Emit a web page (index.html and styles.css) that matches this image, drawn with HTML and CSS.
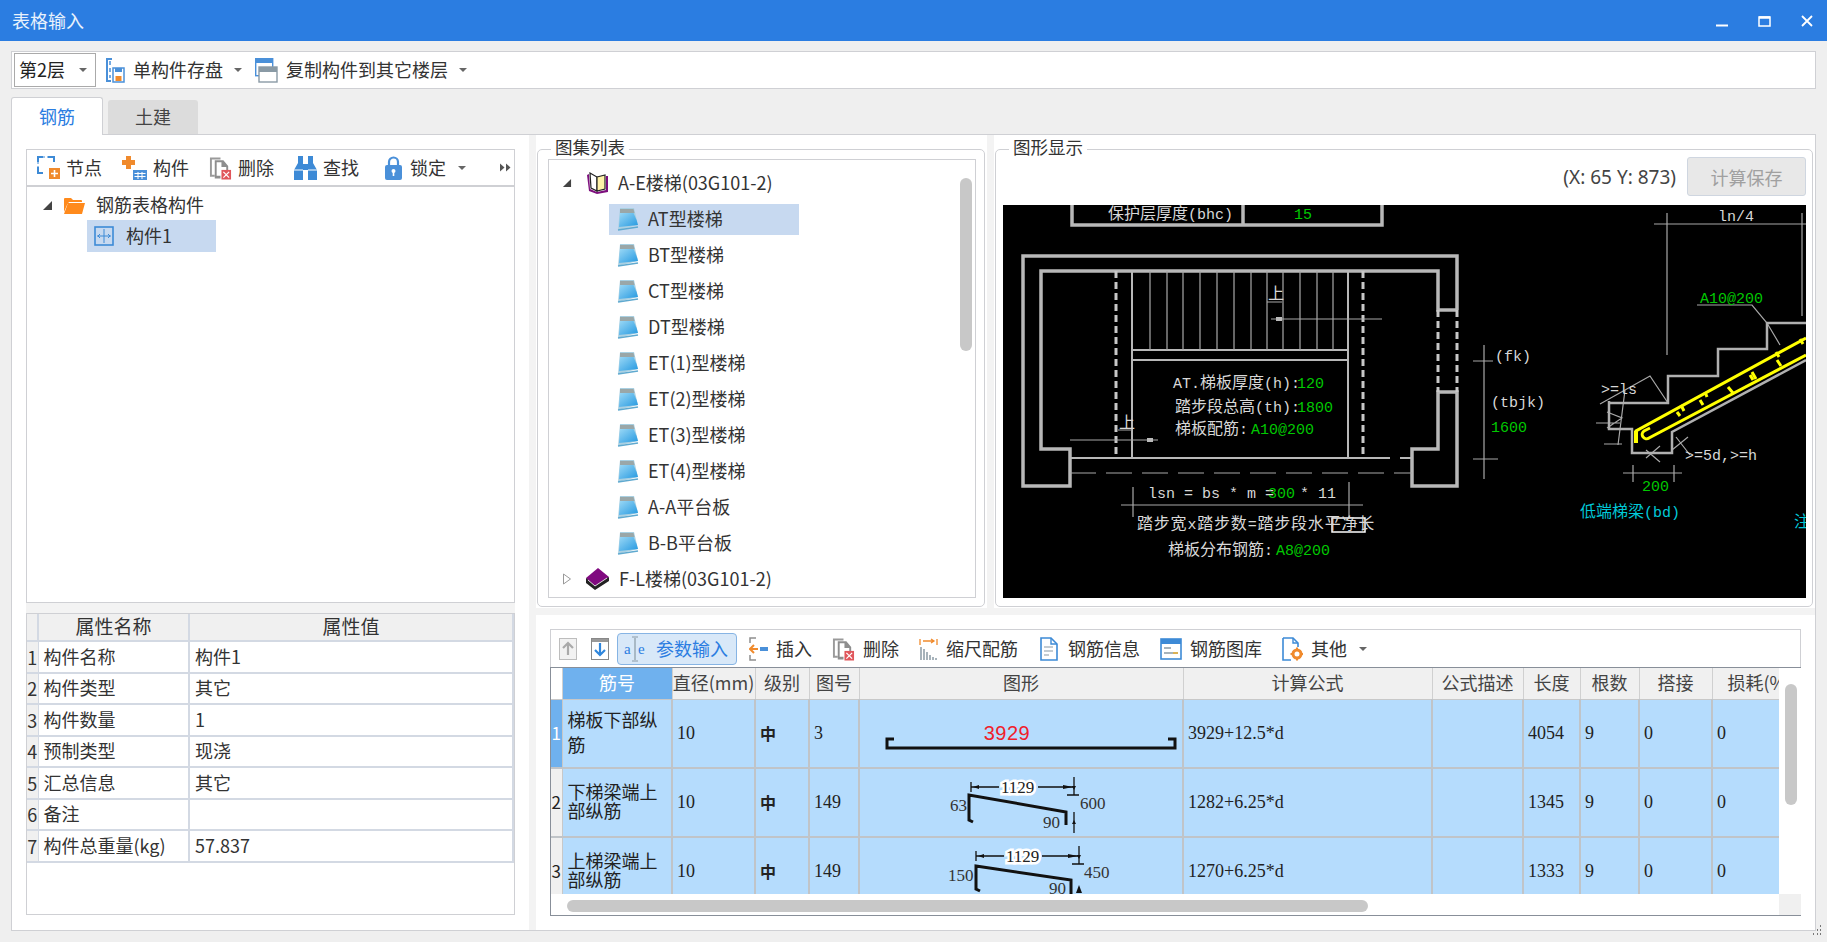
FILE: index.html
```html
<!DOCTYPE html>
<html lang="zh-CN">
<head>
<meta charset="utf-8">
<title>表格输入</title>
<link rel="stylesheet" href="styles.css">
</head>
<body>
<svg class="defs" width="0" height="0" aria-hidden="true">
  <defs>
    <linearGradient id="docgrad" x1="0" y1="0" x2="1" y2="1"><stop offset="0" stop-color="#9ad8f6"/><stop offset="1" stop-color="#2498e0"/></linearGradient>
    <symbol id="i-doc" viewBox="0 0 22 24">
      <path d="M1 23 L3 1 H17 L21 18 L1 23Z" fill="#a9d0e2"/>
      <path d="M3 7 L3 2 H16.500 L17.500 6Z" fill="#9aa7a8"/>
      <path d="M3 6 H16.500 Q20 13 21 18 L2 20Z" fill="url(#docgrad)"/>
      <path d="M1 23 L21 20" stroke="#5fa9cf" stroke-width="1.500"/>
    </symbol>
    <symbol id="i-del" viewBox="0 0 24 24">
      <path d="M1 1H12V3H3V19H6V21H1Z" fill="#9a9a9a"/>
      <path d="M6 4H15L20 10V14H18V11H13V6H8V20H12V23H6Z" fill="#8e8e8e"/>
      <rect x="13" y="14" width="10" height="10" fill="#e0565b"/>
      <path d="M15 16L21 22M21 16L15 22" stroke="#fff" stroke-width="1.300"/>
    </symbol>
    <symbol id="i-arrow" viewBox="0 0 10 6"><path d="M1 1H9L5 5Z" fill="#666"/></symbol>
  </defs>
</svg>

<header class="titlebar">
  <span class="title">表格输入</span>
  <div class="winbtns">
    <svg width="12" height="12" viewBox="0 0 12 12"><path d="M0 10.500H12" stroke="#fff" stroke-width="2"/></svg>
    <svg width="13" height="12" viewBox="0 0 13 12"><rect x="1" y="2" width="11" height="9" fill="none" stroke="#fff" stroke-width="1.500"/><path d="M1 2.500H12" stroke="#fff" stroke-width="2.500"/></svg>
    <svg width="12" height="12" viewBox="0 0 12 12"><path d="M1 1L11 11M11 1L1 11" stroke="#fff" stroke-width="1.800"/></svg>
  </div>
</header>

<div class="topbar">
  <div class="select"><span>第2层</span><svg class="caret" width="10" height="6"><use href="#i-arrow"/></svg></div>
  <div class="tool t1">
    <svg width="20" height="26" viewBox="0 0 20 26"><path d="M1 1H7V3H3V23H6V25H1Z" fill="#4a90d9"/><path d="M5 4V8M5 11V15M5 18V21" stroke="#4a90d9" stroke-width="1.500"/><rect x="8" y="11" width="11" height="14" fill="#fff" stroke="#4a90d9" stroke-width="1.500"/><rect x="10" y="11" width="7" height="4" fill="#4a90d9"/><rect x="10.500" y="19" width="6" height="5" fill="#f08a2c"/></svg>
    <span>单构件存盘</span><svg class="caret" width="10" height="6"><use href="#i-arrow"/></svg>
  </div>
  <div class="tool t2">
    <svg width="23" height="25" viewBox="0 0 23 25"><rect x="0.700" y="0.700" width="17" height="17" fill="#fff" stroke="#4a90d9" stroke-width="1.400"/><rect x="0" y="0" width="18" height="5" fill="#4a90d9"/><rect x="4" y="9" width="18" height="15" fill="#fff" stroke="#8a9aa5" stroke-width="1.400"/><rect x="4" y="9" width="18" height="5" fill="#8a9aa5"/></svg>
    <span>复制构件到其它楼层</span><svg class="caret" width="10" height="6"><use href="#i-arrow"/></svg>
  </div>
</div>

<nav class="tabs">
  <div class="tab active">钢筋</div>
  <div class="tab">土建</div>
</nav>

<main class="panel">
  <section class="left">
    <div class="ltools">
      <div class="tool">
        <svg width="23" height="23" viewBox="0 0 23 23"><path d="M1 6V1H6M11 1H17V6M1 11V17H6" fill="none" stroke="#3d8ad6" stroke-width="2"/><path d="M6 1H11M1 6V11" stroke="#3d8ad6" stroke-width="1" stroke-dasharray="2 2"/><rect x="12" y="12" width="11" height="11" fill="#f08a2c"/><path d="M17.500 14V21M14 17.500H21" stroke="#fff" stroke-width="1.600"/></svg>
        <span>节点</span>
      </div>
      <div class="tool">
        <svg width="25" height="24" viewBox="0 0 25 24"><path d="M4 0H9V4H13V9H9V13H4V9H0V4H4Z" fill="#f08a2c"/><rect x="11" y="14" width="14" height="10" fill="#4a90d9"/><path d="M12.500 17.500H23.500M12.500 20.500H23.500M16 16V23M20 16V23" stroke="#fff" stroke-width="1"/></svg>
        <span>构件</span>
      </div>
      <div class="tool"><svg width="23" height="24"><use href="#i-del"/></svg><span>删除</span></div>
      <div class="tool">
        <svg width="23" height="24" viewBox="0 0 23 24"><path d="M4 0H9V8H14V0H19V7L23 14V24H14V14H9V24H0V14L4 7Z" fill="#3d8ad6"/><path d="M0 14H9M14 14H23" stroke="#fff" stroke-width="1.200"/></svg>
        <span>查找</span>
      </div>
      <div class="tool lock">
        <svg width="17" height="24" viewBox="0 0 17 24"><path d="M4 10V6a4.500 4.500 0 0 1 9 0V10" fill="none" stroke="#4a90d9" stroke-width="2.200"/><rect x="0" y="9" width="17" height="15" rx="2" fill="#4a90d9"/><circle cx="8.500" cy="15" r="2" fill="#fff"/><path d="M8.500 15V20" stroke="#fff" stroke-width="1.600"/></svg>
        <span>锁定</span><svg class="caret" width="10" height="6"><use href="#i-arrow"/></svg>
      </div>
      <svg class="more" width="11" height="9" viewBox="0 0 11 9"><path d="M0 0.500L4.500 4.500L0 8.500ZM6 0.500L10.500 4.500L6 8.500Z" fill="#555"/></svg>
    </div>
    <div class="tree">
      <div class="tree-root">
        <svg class="tri" width="11" height="11" viewBox="0 0 11 11"><path d="M10 1V10H1Z" fill="#444"/></svg>
        <svg width="21" height="17" viewBox="0 0 21 17"><path d="M0 2a1 1 0 0 1 1-1h6l2 2h8a1 1 0 0 1 1 1v1H5L3 8L0 15Z" fill="#ff8a1c"/><path d="M4 6H21L18 17H0Z" fill="#ff8a1c"/></svg>
        <span>钢筋表格构件</span>
      </div>
      <div class="tree-child">
        <svg width="20" height="20" viewBox="0 0 20 20"><rect x="1" y="1" width="18" height="18" fill="none" stroke="#3d8ad6" stroke-width="1.600"/><path d="M10 3V17M3 10H17M6 8L4 10L6 12M14 8L16 10L14 12" fill="none" stroke="#3d8ad6" stroke-width="1"/></svg>
        <span>构件1</span>
      </div>
    </div>
    <div class="lgap"></div>
    <div class="props">
      <table class="ptable">
        <colgroup><col class="p0"><col class="p1"><col></colgroup>
        <thead><tr><th></th><th>属性名称</th><th>属性值</th></tr></thead>
        <tbody>
          <tr><td class="n">1</td><td>构件名称</td><td>构件1</td></tr>
          <tr><td class="n">2</td><td>构件类型</td><td>其它</td></tr>
          <tr><td class="n">3</td><td>构件数量</td><td>1</td></tr>
          <tr><td class="n">4</td><td>预制类型</td><td>现浇</td></tr>
          <tr><td class="n">5</td><td>汇总信息</td><td>其它</td></tr>
          <tr><td class="n">6</td><td>备注</td><td></td></tr>
          <tr><td class="n">7</td><td>构件总重量(kg)</td><td>57.837</td></tr>
        </tbody>
      </table>
    </div>
  </section>
  <div class="lsplit"></div>

  <section class="right">
    <div class="rtop">
      <div class="pane pane-list">
        <div class="group">
          <span class="legend">图集列表</span>
          <div class="atlas">
            <div class="a-head">
              <svg class="tri" width="10" height="10" viewBox="0 0 11 11"><path d="M10 1V10H1Z" fill="#444"/></svg>
              <svg class="book" width="24" height="24" viewBox="0 0 24 24"><path d="M2 4L4 20L12 23L23 21V5L21 5V19L12 21L5 18L4 3Z" fill="#7d0f7d"/><path d="M5 2L12 6V20L6 17Z" fill="#fff" stroke="#222" stroke-width="1.200"/><path d="M12 6L20 4V18L12 20Z" fill="#fff3a8" stroke="#222" stroke-width="1.200"/></svg>
              <span>A-E楼梯(03G101-2)</span>
            </div>
            <div class="a-item"><div class="a-in sel"><svg width="22" height="24"><use href="#i-doc"/></svg><span>AT型楼梯</span></div></div>
            <div class="a-item"><div class="a-in"><svg width="22" height="24"><use href="#i-doc"/></svg><span>BT型楼梯</span></div></div>
            <div class="a-item"><div class="a-in"><svg width="22" height="24"><use href="#i-doc"/></svg><span>CT型楼梯</span></div></div>
            <div class="a-item"><div class="a-in"><svg width="22" height="24"><use href="#i-doc"/></svg><span>DT型楼梯</span></div></div>
            <div class="a-item"><div class="a-in"><svg width="22" height="24"><use href="#i-doc"/></svg><span>ET(1)型楼梯</span></div></div>
            <div class="a-item"><div class="a-in"><svg width="22" height="24"><use href="#i-doc"/></svg><span>ET(2)型楼梯</span></div></div>
            <div class="a-item"><div class="a-in"><svg width="22" height="24"><use href="#i-doc"/></svg><span>ET(3)型楼梯</span></div></div>
            <div class="a-item"><div class="a-in"><svg width="22" height="24"><use href="#i-doc"/></svg><span>ET(4)型楼梯</span></div></div>
            <div class="a-item"><div class="a-in"><svg width="22" height="24"><use href="#i-doc"/></svg><span>A-A平台板</span></div></div>
            <div class="a-item"><div class="a-in"><svg width="22" height="24"><use href="#i-doc"/></svg><span>B-B平台板</span></div></div>
            <div class="a-head">
              <svg class="tri" width="10" height="12" viewBox="0 0 10 12"><path d="M1.500 1L8.500 6L1.500 11Z" fill="#fff" stroke="#999"/></svg>
              <svg class="book" width="25" height="24" viewBox="0 0 25 24"><path d="M1 11L13 1L24 10L10 22Z" fill="#800a80"/><path d="M1 11V16L10 23L24 14V10L10 19Z" fill="#222"/><path d="M3 13L10 19L22 11" stroke="#ddd" stroke-width="1" fill="none"/></svg>
              <span>F-L楼梯(03G101-2)</span>
            </div>
            <div class="vthumb"></div>
          </div>
        </div>
      </div>
      <div class="vsplit"></div>
      <div class="pane pane-draw">
        <div class="group">
          <span class="legend legend2">图形显示</span>
          <div class="drawhead">
            <span class="coords">(X: 65 Y: 873)</span>
            <button class="calc" type="button">计算保存</button>
          </div>
          <svg class="cad" width="803" height="393" viewBox="1003 205 803 393">
            <rect x="1003" y="205" width="803" height="393" fill="#000"/>
            <g class="th" fill="none">
              <path d="M1072 205V225H1382V205M1243 205V225"/>
              <path d="M1457 310V256H1023V486H1070V449H1041V271H1438V310H1457"/>
              <path d="M1457 392H1438V449H1412V486H1457Z"/>
            </g>
            <g class="dash" fill="none">
              <path d="M1438 310V392M1457 310V392M1116 271V458M1363 271V458"/>
            </g>
            <g class="md" fill="none">
              <path d="M1132 271V458M1348 271V458M1132 350H1348M1132 360H1348M1070 458H1390M1400 458H1412"/>
            </g>
            <g class="tn" fill="none">
              <path d="M1150 271V350M1167 271V350M1183 271V350M1200 271V350M1217 271V350M1234 271V350M1251 271V350M1267 271V350M1283 271V350M1300 271V350M1317 271V350M1333 271V350"/>
              <path d="M1271 319H1382M1070 440H1158M1267 302H1282M1118 430H1132"/>
              <path d="M1121 505H1363M1133 487V517M1349 482V517"/>
              <path d="M1070 473H1412" stroke-dasharray="26 10"/>
              <path d="M1654 224H1806M1667 213V355M1802 213V316"/>
              <path d="M1697 305H1752L1767 323L1780 345"/>
              <path d="M1473 361H1493M1484 345V479M1473 459H1498"/>
              <path d="M1623 473H1682M1633 465V482M1674 465V482"/>
              <path d="M1600 404L1650 376L1668 403M1625 390L1618 445M1596 423H1620M1607 412L1622 418L1607 428M1604 444H1622M1646 458L1660 446M1646 450L1660 462M1676 437L1690 455M1672 450L1688 437"/>
            </g>
            <rect x="1276" y="317" width="6" height="4" fill="#bbb"/>
            <rect x="1147" y="438" width="6" height="4" fill="#bbb"/>
            <rect class="wbox" x="1332" y="518" width="33" height="14" fill="none"/>
            <g class="th2" fill="none">
              <path d="M1609 401V429H1632V453H1672V432L1806 360M1609 403H1668V376H1718V349H1767V323H1806"/>
            </g>
            <g class="yl" fill="none">
              <path d="M1636 443V431L1806 338"/>
              <path d="M1806 355L1649 438A4 4 0 0 1 1644 431L1650 428"/>
              <path d="M1677 412L1680 416M1700 400L1703 405M1728 387L1733 393M1752 372L1756 379M1777 360L1781 366M1800 339L1803 344M1681 405L1684 411M1705 392L1707 397M1750 375L1753 380M1776 352L1779 357"/>
            </g>
            <rect x="1634" y="431" width="4" height="12" fill="#ff0"/>
            <g class="ct w">
              <text x="1108" y="219"><tspan class="z">保护层厚度</tspan>(bhc)</text>
              <text x="1173" y="388">AT.<tspan class="z">梯板厚度</tspan>(h):</text>
              <text x="1175" y="412"><tspan class="z">踏步段总高</tspan>(th):</text>
              <text x="1175" y="434"><tspan class="z">梯板配筋</tspan>:</text>
              <text x="1148" y="498">lsn = bs * m =</text>
              <text x="1137" y="529" class="wide"><tspan class="z">踏步宽</tspan>x<tspan class="z">踏步数</tspan>=<tspan class="z">踏步段水平净长</tspan></text>
              <text x="1168" y="555"><tspan class="z">梯板分布钢筋</tspan>:</text>
              <text x="1268" y="299" class="z">上</text>
              <text x="1119" y="428" class="z">上</text>
              <text x="1718" y="221">ln/4</text>
              <text x="1495" y="361">(fk)</text>
              <text x="1491" y="407">(tbjk)</text>
              <text x="1601" y="394">&gt;=ls</text>
              <text x="1685" y="460">&gt;=5d,&gt;=h</text>
              <text x="1300" y="498">* 11</text>
            </g>
            <g class="ct g">
              <text x="1294" y="219">15</text>
              <text x="1297" y="388">120</text>
              <text x="1297" y="412">1800</text>
              <text x="1251" y="434">A10@200</text>
              <text x="1268" y="498">300</text>
              <text x="1276" y="555">A8@200</text>
              <text x="1700" y="303">A10@200</text>
              <text x="1491" y="432">1600</text>
              <text x="1642" y="491">200</text>
            </g>
            <g class="ct c">
              <text x="1580" y="517"><tspan class="z">低端梯梁</tspan>(bd)</text>
              <text x="1794" y="527" class="z">注</text>
            </g>
          </svg>
        </div>
      </div>
    </div>
    <div class="hsplit"></div>
    <div class="rbottom">
      <div class="gtools">
        <svg class="updown first" width="18" height="22" viewBox="0 0 18 22"><rect x="0.500" y="0.500" width="17" height="21" fill="#f2f2f2" stroke="#bdbdbd"/><path d="M9 5V17M4 10L9 5L14 10" fill="none" stroke="#aaa" stroke-width="2.200"/></svg>
        <svg class="updown" width="18" height="22" viewBox="0 0 18 22"><rect x="0.500" y="0.500" width="17" height="21" fill="#fff" stroke="#888"/><rect x="1" y="1" width="16" height="3" fill="#999"/><path d="M9 5V17M4 12L9 17L14 12" fill="none" stroke="#2f86dc" stroke-width="2.200"/></svg>
        <div class="tool param">
          <svg width="22" height="28" viewBox="0 0 22 28"><text class="aje" x="0" y="19">a</text><text class="aje" x="14" y="19">e</text><path d="M11 3V25M8 2H14M8 26H14" stroke="#8a9aa5" stroke-width="1.200" fill="none"/></svg>
          <span>参数输入</span>
        </div>
        <div class="tool">
          <svg width="19" height="24" viewBox="0 0 19 24"><path d="M1 6V1H7M1 18V23H7" fill="none" stroke="#8e8e8e" stroke-width="1.500"/><path d="M9 12H1M5 8L1 12L5 16" fill="none" stroke="#f08a2c" stroke-width="2"/><path d="M11 10H19V14H11Z" fill="#4a90d9"/></svg>
          <span>插入</span>
        </div>
        <div class="tool"><svg width="23" height="24"><use href="#i-del"/></svg><span>删除</span></div>
        <div class="tool">
          <svg width="19" height="24" viewBox="0 0 19 24"><path d="M1 2V8M18 2V8M4 4H15M12 2L15 4L12 6" fill="none" stroke="#f08a2c" stroke-width="1.300"/><path d="M2 10V23M5 12V23M8 15V23M11 18V23M14 20V23M17 21V23" stroke="#8a9aa5" stroke-width="1.500"/></svg>
          <span>缩尺配筋</span>
        </div>
        <div class="tool info">
          <svg width="18" height="24" viewBox="0 0 18 24"><path d="M1 1H11L17 7V23H1Z" fill="#fff" stroke="#3d8ad6" stroke-width="1.600"/><path d="M11 1V7H17" fill="none" stroke="#3d8ad6" stroke-width="1.400"/><path d="M4 10H13M4 14H13M4 18H9" stroke="#8a9aa5" stroke-width="1.200"/></svg>
          <span>钢筋信息</span>
        </div>
        <div class="tool">
          <svg width="22" height="22" viewBox="0 0 22 22"><rect x="1" y="1" width="20" height="20" fill="#fff" stroke="#3d8ad6" stroke-width="1.600"/><rect x="1" y="1" width="20" height="5" fill="#3d8ad6"/><path d="M4 10H11M4 15H18" stroke="#8a9aa5" stroke-width="1.400"/><path d="M13 15H18" stroke="#f0b02c" stroke-width="1.400"/></svg>
          <span>钢筋图库</span>
        </div>
        <div class="tool">
          <svg width="21" height="24" viewBox="0 0 21 24"><path d="M1 1H11L16 6V10M1 1V23H9" fill="#fff" stroke="#3d8ad6" stroke-width="1.600"/><path d="M11 1V6H16" fill="none" stroke="#3d8ad6" stroke-width="1.400"/><circle cx="15" cy="17" r="4" fill="none" stroke="#f08a2c" stroke-width="3"/><path d="M15 10.500V12M15 22V23.500M8.500 17H10M20 17H21.500" stroke="#f08a2c" stroke-width="2"/></svg>
          <span>其他</span><svg class="caret" width="10" height="6"><use href="#i-arrow"/></svg>
        </div>
      </div>
      <div class="gridbox">
        <div class="gridview">
          <table class="gtable">
            <colgroup>
              <col class="c0"><col class="c1"><col class="c2"><col class="c3"><col class="c4"><col class="c5"><col class="c6"><col class="c7"><col class="c8"><col class="c9"><col class="c10"><col class="c11">
            </colgroup>
            <thead>
              <tr><th class="corner"></th><th class="on">筋号</th><th>直径(mm)</th><th>级别</th><th>图号</th><th>图形</th><th>计算公式</th><th>公式描述</th><th>长度</th><th>根数</th><th>搭接</th><th class="clip">损耗(%)</th></tr>
            </thead>
            <tbody>
              <tr>
                <td class="rn on">1</td><td class="name loose">梯板下部纵筋</td><td class="num">10</td><td class="lvl">中</td><td class="num">3</td>
                <td class="shape"><svg width="324" height="67" viewBox="859 700 324 67"><path class="bar" d="M893 739H886V748H1174V739H1167" fill="none"/><text class="red" x="1006" y="740">3929</text></svg></td>
                <td class="num">3929+12.5*d</td><td></td><td class="num">4054</td><td class="num">9</td><td class="num">0</td><td class="num">0</td>
              </tr>
              <tr>
                <td class="rn">2</td><td class="name">下梯梁端上部纵筋</td><td class="num">10</td><td class="lvl">中</td><td class="num">149</td>
                <td class="shape"><svg width="324" height="67" viewBox="859 769 324 67">
                  <path class="dim" d="M970 782V792M970 787H998M1037 787H1073M1073 777V795M1066 795H1078M1073 812V833" fill="none"/>
                  <path class="tick" d="M972 787L978 785V789ZM1072 787L1062 785V789ZM1073 820L1071 824H1075ZM1073 790L1071 786H1075Z"/>
                  <path class="bar2" d="M972 822L968 820V795L1065 812V825" fill="none"/>
                  <text class="sh" x="1000" y="793">1129</text>
                  <text class="sh2" x="949" y="811">63</text><text class="sh2" x="1079" y="809">600</text><text class="sh2" x="1042" y="828">90</text>
                </svg></td>
                <td class="num">1282+6.25*d</td><td></td><td class="num">1345</td><td class="num">9</td><td class="num">0</td><td class="num">0</td>
              </tr>
              <tr>
                <td class="rn">3</td><td class="name">上梯梁端上部纵筋</td><td class="num">10</td><td class="lvl">中</td><td class="num">149</td>
                <td class="shape"><svg width="324" height="67" viewBox="859 838 324 67">
                  <path class="dim" d="M975 851V861M975 856H1003M1041 856H1078M1078 846V864M1071 864H1083" fill="none"/>
                  <path class="tick" d="M977 856L983 854V858ZM1077 856L1067 854V858ZM1078 859L1076 855H1080ZM1078 885L1075 893H1081Z"/>
                  <path class="bar2" d="M979 891L975 889V866L1070 880V900" fill="none"/>
                  <text class="sh" x="1005" y="862">1129</text>
                  <text class="sh2" x="947" y="881">150</text><text class="sh2" x="1083" y="878">450</text><text class="sh2" x="1048" y="894">90</text>
                </svg></td>
                <td class="num">1270+6.25*d</td><td></td><td class="num">1333</td><td class="num">9</td><td class="num">0</td><td class="num">0</td>
              </tr>
            </tbody>
          </table>
        </div>
        <div class="vbar"><div class="vbar-thumb"></div></div>
        <div class="hbar"><div class="hbar-thumb"></div></div>
        <div class="cornerbox"></div>
      </div>
    </div>
  </section>
</main>
<footer class="status"><svg width="14" height="11" viewBox="0 0 14 11"><path d="M12 1h1M9 5h1M12 5h1M5 9h1M9 9h1M12 9h1" stroke="#777" stroke-width="2" fill="none"/></svg></footer>
</body>
</html>
```

FILE: styles.css
```css
* { box-sizing: border-box; }
html, body { margin: 0; padding: 0; }
body {
  width: 1827px; height: 942px; overflow: hidden;
  background: #efefef; color: #333;
  font-family: "Noto Sans CJK SC", "Noto Sans", sans-serif;
  font-size: 18px; line-height: 24px;
  display: flex; flex-direction: column;
}
.defs { flex: none; display: block; }
svg { flex: none; }
.titlebar {
  height: 41px; flex: none; background: #2b7de1; color: #e8f2fc;
  display: flex; align-items: center; justify-content: space-between;
  padding: 0 14px 0 12px;
}
.title { font-size: 18px; padding-bottom: 2px; }
.winbtns { display: flex; gap: 30px; align-items: center; }

.topbar {
  flex: none; height: 38px; margin: 10px 11px 0 11px;
  background: #fff; border: 1px solid #cfd0d4;
  display: flex; align-items: center; padding-left: 2px;
}
.topbar span { padding-bottom: 2px; }
.select {
  width: 82px; height: 34px; border: 1px solid #aaa; background: #fff;
  display: flex; align-items: center; justify-content: space-between;
  padding: 0 7px 0 4px; color: #222;
}
.tool { display: flex; align-items: center; gap: 8px; white-space: nowrap; }
.caret { display: block; }
.t1 { margin-left: 9px; }
.t1 .caret { margin-left: 2px; }
.t2 { margin-left: 12px; }
.t2 .caret { margin-left: 2px; }

.tabs { flex: none; height: 37px; margin: 8px 11px 0 11px; display: flex; align-items: flex-end; gap: 5px; }
.tab {
  width: 90px; height: 34px; background: #dcdcdc; border-radius: 3px 3px 0 0; padding-bottom: 2px;
  display: flex; align-items: center; justify-content: center; color: #444;
}
.tab.active {
  width: 92px; height: 38px; margin-bottom: -1px; background: #fff; color: #2b7de1;
  border: 1px solid #cfd0d4; border-bottom: 0; position: relative;
}
.panel {
  flex: none; height: 797px; margin: 0 11px; display: flex;
  border: 1px solid #cfd0d4; background: #fff;
}
.left { width: 517px; flex: none; padding: 14px 14px 15px; display: flex; flex-direction: column; background: #fff; }
.lsplit { width: 7px; flex: none; background: #f3f3f3; }
.ltools {
  height: 38px; flex: none; border: 1px solid #cfd0d4; border-bottom-width: 2px;
  display: flex; align-items: center; padding-left: 10px; gap: 20px; position: relative;
}
.ltools span { padding-bottom: 2px; }
.ltools .tool { gap: 6px; }
.ltools .lock { margin-left: 6px; gap: 8px; }
.ltools .caret { margin-left: 3px; }
.more { margin-left: auto; margin-right: 3px; }
.tree { height: 416px; flex: none; border: 1px solid #cfd0d4; border-top: 0; padding-top: 5px; }
.tree-root { height: 26px; display: flex; align-items: center; padding-left: 15px; color: #333; }
.tree-root .tri { margin-right: 11px; }
.tree-root span { margin-left: 11px; padding-bottom: 3px; }
.tree-child {
  margin: 2px 0 0 60px; width: 129px; height: 32px; background: #c7d9f0;
  display: flex; align-items: center; padding-left: 7px; gap: 12px;
}
.tree-child span { padding-bottom: 2px; }
.lgap { height: 10px; flex: none; background: #f3f3f3; }
.props { height: 302px; flex: none; border: 1px solid #cfd0d4; }
.ptable { width: 100%; border-collapse: collapse; table-layout: fixed; }
.p0 { width: 11px; }
.p1 { width: 151px; }
.ptable th {
  height: 27px; background: #f0f0f0; font-weight: 400; font-size: 19px; padding: 0 0 2px;
  border-right: 2px solid #d3d9e3; border-bottom: 2px solid #d3d9e3; line-height: 24px;
}
.ptable td {
  height: 31.500px; padding: 0 0 2px 5px; border-right: 2px solid #d3d9e3; border-bottom: 2px solid #d3d9e3;
  white-space: nowrap; overflow: hidden;
}
.ptable td.n { background: #f0f0f0; padding: 0; text-align: center; border-right: 1px solid #d3d9e3; }

.right { flex: 1; min-width: 0; display: flex; flex-direction: column; background: #f3f3f3; }
.rtop { height: 473px; flex: none; display: flex; }
.hsplit { height: 7px; flex: none; }
.vsplit { width: 7px; flex: none; }
.pane { background: #fff; padding: 14px 2px 0 1px; }
.pane-list { width: 451px; flex: none; }
.pane-draw { flex: 1; min-width: 0; }
.group {
  height: 458px; border: 1px solid #cfd0d4; border-radius: 5px; padding: 0 8px 8px 10px;
  display: flex; flex-direction: column;
}
.pane-draw .group { padding: 0 6px 0 7px; }
.legend {
  display: block; width: max-content; margin: -14px 0 2px 3px; padding: 0 4px; height: 21px; line-height: 21px;
  background: #fff; font-size: 17.500px; flex: none;
}
.legend2 { margin-left: 6px; }
.atlas {
  flex: 1; border: 1px solid #cfd0d4; padding-top: 5px; position: relative;
}
.a-head { height: 36px; display: flex; align-items: center; padding-left: 13px; }
.a-head .tri { margin-right: 13px; }
.a-head span { margin-left: 9px; padding-bottom: 2px; }
.a-item { height: 36px; display: flex; align-items: center; padding-left: 60px; }
.a-in { width: 190px; height: 31px; display: flex; align-items: center; padding-left: 8px; gap: 9px; }
.a-in span { padding-bottom: 2px; }
.a-in.sel { background: #c7d9f0; }
.vthumb {
  position: absolute; left: 411px; top: 18px; width: 12px; height: 173px; border-radius: 6px; background: #c8c8c8;
}
.drawhead { height: 49px; flex: none; margin-top: -3px; display: flex; justify-content: flex-end; align-items: center; gap: 11px; padding-bottom: 8px; }
.coords { font-size: 19px; color: #444; font-family: "Noto Sans", sans-serif; }
.calc {
  width: 119px; height: 39px; border: 1px solid #cfd6e0; border-radius: 3px; background: #e8e8e8; color: #a0a0a0;
  font: inherit;
}
.cad { display: block; }
.th { stroke: #b8b8b8; stroke-width: 3.500; }
.th2 { stroke: #b0b0b0; stroke-width: 2.500; }
.dash { stroke: #c8c8c8; stroke-width: 3; stroke-dasharray: 7 4; }
.md { stroke: #b8b8b8; stroke-width: 2; }
.tn { stroke: #a8a8a8; stroke-width: 1.200; }
.wbox { stroke: #fff; stroke-width: 1.500; }
.yl { stroke: #ffff00; stroke-width: 3; }
.ct text { font-family: "Liberation Mono", "Noto Sans CJK SC", monospace; font-size: 15px; }
.ct .z { font-size: 16px; }
.ct .wide { letter-spacing: 0.800px; }
.w { fill: #d8d8d8; }
.g { fill: #00c800; }
.c { fill: #00c8d8; }

.rbottom { flex: 1; min-height: 0; background: #fff; padding: 14px 14px 14px 14px; display: flex; flex-direction: column; }
.gtools {
  height: 38px; flex: none; border: 1px solid #cfd0d4; border-bottom: 0; display: flex; align-items: center; padding-left: 8px; gap: 20px;
}
.gtools span { padding-bottom: 2px; }
.updown.first { margin-right: -6px; }
.updown { margin-right: -12px; }
.gtools .tool { gap: 8px; }
.gtools .caret { margin-left: 3px; }
.gtools .info { margin-left: 2px; gap: 10px; }
.param {
  width: 120px; height: 32px; background: #d8e8f8; border: 1px solid #86b4e4; border-radius: 4px;
  padding-left: 6px; color: #2b7de1; margin-right: -8px;
}
.gtools .param { gap: 10px; }
.aje { font-family: "Liberation Serif", serif; font-size: 15px; fill: #2b7de1; }

.gridbox {
  height: 249px; flex: none; border: 1px solid #888f99;
  display: grid; grid-template-columns: 1228px 1fr; grid-template-rows: 226px 1fr; background: #fff;
}
.gridview { overflow: hidden; }
.gtable { width: 1228px; border-collapse: collapse; table-layout: fixed; }
.c0 { width: 11px; } .c1 { width: 110px; } .c2 { width: 83px; } .c3 { width: 54px; }
.c4 { width: 50px; } .c5 { width: 324px; } .c6 { width: 249px; } .c7 { width: 91px; }
.c8 { width: 57px; } .c9 { width: 59px; } .c10 { width: 73px; } .c11 { width: 67px; }
.gtable th {
  height: 31px; background: #f0f0f0; font-weight: 400; padding: 0 0 2px; white-space: nowrap; overflow: hidden;
  border-right: 1px solid #d0d0d0; border-bottom: 1px solid #c8c8c8; color: #444;
}
.gtable th.corner { background: #fff; }
.gtable th.on { background: #6fb1ee; color: #fff; }
.gtable th.clip { text-overflow: clip; border-right: 0; text-align: left; padding-left: 15px; }
.gtable td {
  height: 68.500px; background: #b5dcfd; padding: 0 0 0 4px; border-right: 2px solid #c0c4c8; border-bottom: 2px solid #c0c4c8;
  color: #222; overflow: hidden;
}
.gtable td:last-child { border-right: 0; }
.gtable td.rn { background: #f0f0f0; padding: 0; text-align: center; font-size: 17px; border-right: 1px solid #c8c8c8; }
.gtable td.rn.on { background: #6fb1ee; color: #fff; }
.gtable td.name { line-height: 19px; padding: 0 0 2px 5px; }
.gtable td.name.loose { line-height: 25px; padding: 0 0 3px 5px; }
.num { font-family: "Liberation Serif", serif; font-size: 18px; }
.lvl { font-size: 16px; font-weight: 700; }
.gtable td.shape { padding: 0; }
.shape svg { display: block; }
.bar { stroke: #111; stroke-width: 3; }
.bar2 { stroke: #111; stroke-width: 3; }
.dim { stroke: #111; stroke-width: 1.300; }
.tick { fill: #111; }
.red { fill: #f0202a; font-size: 20px; font-family: "Liberation Sans", sans-serif; text-anchor: middle; letter-spacing: 0.500px; }
.sh { font-family: "Liberation Serif", serif; font-size: 17px; fill: #222; paint-order: stroke; stroke: #fff; stroke-width: 5px; }
.sh2 { font-family: "Liberation Serif", serif; font-size: 17px; fill: #333; }
.vbar { grid-row: 1; grid-column: 2; background: #fff; padding: 16px 4px 0 6px; }
.vbar-thumb { width: 12px; height: 121px; border-radius: 6px; background: #c8c8c8; }
.hbar { grid-row: 2; grid-column: 1; padding: 6px 0 0 16px; }
.hbar-thumb { width: 801px; height: 12px; border-radius: 6px; background: #c8c8c8; }
.cornerbox { grid-row: 2; grid-column: 2; background: #f0f0f0; }

.status { flex: 1; min-height: 0; display: flex; justify-content: flex-end; align-items: flex-start; padding-right: 5px; margin-top: -6px; }
```
